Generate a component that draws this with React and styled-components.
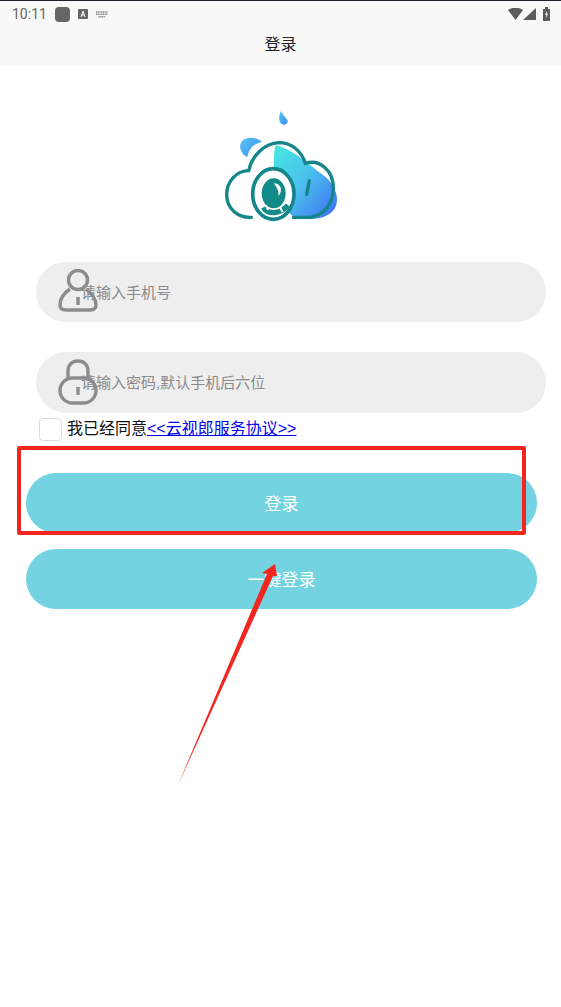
import React from "react";
import styled, { createGlobalStyle } from "styled-components";

const GlobalStyle = createGlobalStyle`
  html, body {
    margin: 0;
    padding: 0;
    background: #fff;
    font-family: "Liberation Sans", "Noto Sans CJK SC", sans-serif;
  }
`;

const Page = styled.div`
  position: relative;
  width: 561px;
  height: 1007px;
  overflow: hidden;
  background: #fff;
`;

const Header = styled.header`
  height: 65px;
  box-sizing: border-box;
  border-top: 1px solid #20202a;
  background: #f8f8f8;
`;

const StatusBar = styled.div`
  height: 24px;
  display: flex;
  align-items: center;
  padding: 1px 11px 0 12px;
  color: #666;
  font-family: Roboto, sans-serif;
  font-size: 14px;
`;

const Clock = styled.span`
  width: 43px;
`;

const StatusIcons = styled.div`
  display: flex;
  align-items: center;
  gap: 8px;
`;

const SignalIcons = styled.div`
  display: flex;
  align-items: center;
  margin-left: auto;
`;

const Title = styled.h1`
  margin: 7px 0 0;
  text-align: center;
  font-size: 16px;
  line-height: 24px;
  font-weight: 400;
  color: #222;
`;

const Logo = styled.svg`
  display: block;
  margin: 35px 0 0 210px;
`;

const Form = styled.div`
  margin-top: 32px;
`;

const Field = styled.div`
  position: relative;
  box-sizing: border-box;
  width: 510px;
  height: ${(p) => p.$height}px;
  margin: 0 0 30px 36px;
  padding: 0 0 2px 45px;
  display: flex;
  align-items: center;
  border-radius: 31px;
  background: #eeeeee;
  color: #8a8a8a;
  font-size: 15px;
`;

const FieldIcon = styled.svg`
  position: absolute;
  left: 22px;
  top: 7px;
`;

const Agreement = styled.div`
  display: flex;
  align-items: center;
  height: 23px;
  margin: -25px 0 0 39px;
  font-size: 16px;
  color: #111;
`;

const AgreementText = styled.span`
  position: relative;
  top: -3px;
`;

const CheckBox = styled.span`
  box-sizing: border-box;
  width: 23px;
  height: 23px;
  margin-right: 5px;
  border: 1px solid #dcdcdc;
  border-radius: 4px;
  background: #fff;
`;

const AgreementLink = styled.a`
  color: #0000ee;
  text-decoration: underline;
`;

const ActionButton = styled.button`
  display: block;
  width: 511px;
  height: 60px;
  margin: ${(p) => p.$top}px 0 0 26px;
  padding: 0 0 2px;
  border: 0;
  border-radius: 30px;
  background: #73d3e1;
  color: #fff;
  font: inherit;
  font-size: 17px;
`;

const Highlight = styled.div`
  position: absolute;
  left: 17px;
  top: 446px;
  width: 509px;
  height: 89px;
  box-sizing: border-box;
  border: 4px solid #f1261e;
  border-radius: 2px;
`;

const ArrowMark = styled.svg`
  position: absolute;
  left: 170px;
  top: 555px;
`;

const Logomark = () => (
  <Logo width="140" height="130" viewBox="0 0 420 390">
    <defs>
      <linearGradient id="drop" x1="0" y1="0.1" x2="0.9" y2="0.9">
        <stop offset="0" stopColor="#45e4e4" />
        <stop offset="0.5" stopColor="#4cc0ee" />
        <stop offset="1" stopColor="#3f7cf2" />
      </linearGradient>
      <linearGradient id="splash" x1="0" y1="0" x2="1" y2="1">
        <stop offset="0" stopColor="#55c6f2" />
        <stop offset="1" stopColor="#3f8af2" />
      </linearGradient>
    </defs>
    <path d="M213 33C206 48 205 66 216 73C227 78 236 68 232 60C226 52 218 44 213 33Z" fill="url(#splash)" />
    <path d="M94 126C106 108 140 110 156 126C132 130 116 146 112 172C96 164 84 144 94 126Z" fill="url(#splash)" />
    <path d="M196 136C248 146 298 196 340 226C374 250 392 296 374 326C352 358 300 362 252 352C208 320 180 230 196 136Z" fill="url(#drop)" />
    <path
      d="M124 352C84 354 50 326 50 284C50 244 80 212 116 212C126 164 166 130 206 128C244 128 274 152 286 190C330 176 370 212 370 264C370 312 342 346 300 352L250 352"
      fill="none"
      stroke="#14868a"
      strokeWidth="10"
      strokeLinecap="round"
    />
    <path d="M298 242L290 284" stroke="#14868a" strokeWidth="10" strokeLinecap="round" />
    <ellipse cx="190" cy="282" rx="62" ry="76" fill="#fff" stroke="#14868a" strokeWidth="11" />
    <ellipse cx="191" cy="280" rx="36" ry="45" fill="#118a88" />
    <path d="M160 322C172 342 208 346 234 316" fill="none" stroke="#118a88" strokeWidth="16" />
    <path d="M168 316L174 330M210 322L218 336" stroke="#fff" strokeWidth="6" />
    <path d="M191 250C212 250 220 270 206 288C206 272 200 260 191 250Z" fill="#fff" />
  </Logo>
);

const App = () => (
  <Page>
    <GlobalStyle />
    <Header>
      <StatusBar>
        <Clock>10:11</Clock>
        <StatusIcons>
          <svg width="15" height="15" viewBox="0 0 15 15">
            <rect width="15" height="15" rx="4" fill="#666" />
          </svg>
          <svg width="10" height="10" viewBox="0 0 10 10">
            <rect width="10" height="10" rx="1" fill="#666" />
            <path d="M3 8L5 2L7 8M3.8 6H6.2" stroke="#fff" fill="none" strokeWidth="1" />
          </svg>
          <svg width="12" height="7" viewBox="0 0 12 7">
            <path d="M0 1H12M0 3.2H12M2.5 5.8H9.5" stroke="#888" strokeWidth="1.4" strokeDasharray="1.2 .5" />
          </svg>
        </StatusIcons>
        <SignalIcons>
          <svg width="15" height="12" viewBox="0 0 15 12">
            <path d="M0 2C4-1 11-1 15 2L7.5 12Z" fill="#5c5c5c" />
          </svg>
          <svg width="13" height="12" viewBox="0 0 13 12">
            <path d="M13 0V12H0Z" fill="#5c5c5c" />
          </svg>
          <svg width="7" height="14" viewBox="0 0 7 14" style={{ marginLeft: 7 }}>
            <path d="M0 2H2V0H5V2H7V14H0Z" fill="#5c5c5c" />
            <path d="M4 3.5L2 8H3.5L3 11.5L5 6.5H3.5Z" fill="#fff" />
          </svg>
        </SignalIcons>
      </StatusBar>
      <Title>登录</Title>
    </Header>

    <Logomark />

    <Form>
      <Field $height={60}>
        <FieldIcon width="40" height="46" viewBox="0 0 40 46" fill="none" stroke="#8c8c8c" strokeWidth="3.4">
          <circle cx="20" cy="11" r="9.5" />
          <path d="M12 20C6 24 2 29 2 36C2 40 5 41 8 41H32C35 41 38 40 38 36C38 29 33 24 28 20" />
          <path d="M20 28V36" />
        </FieldIcon>
        请输入手机号
      </Field>
      <Field $height={61}>
        <FieldIcon width="40" height="46" viewBox="0 0 40 46" fill="none" stroke="#8c8c8c" strokeWidth="3.4">
          <path d="M10 20V12C10 6 14 2 20 2C26 2 30 6 30 12V20" />
          <rect x="2" y="19" width="36" height="25" rx="12.5" />
          <path d="M20 28V36" />
        </FieldIcon>
        请输入密码,默认手机后六位
      </Field>
      <Agreement>
        <CheckBox />
        <AgreementText>
          我已经同意
          <AgreementLink href="#">&lt;&lt;云视郎服务协议&gt;&gt;</AgreementLink>
        </AgreementText>
      </Agreement>
      <ActionButton $top={32}>登录</ActionButton>
      <ActionButton $top={16}>一键登录</ActionButton>
    </Form>

    <Highlight />
    <ArrowMark width="115" height="235" viewBox="170 555 115 235">
      <path d="M178 785L267 574L262 573L275 564L277 576L273 576Z" fill="#f1261e" />
    </ArrowMark>
  </Page>
);

export default App;
